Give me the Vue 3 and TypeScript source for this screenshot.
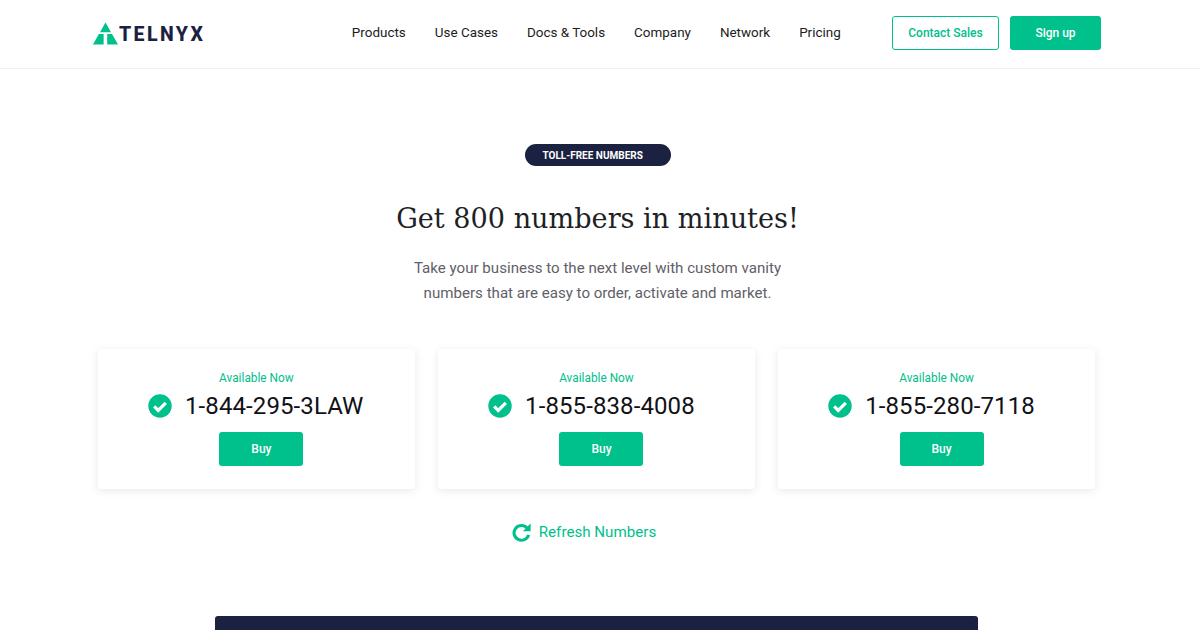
<script setup lang="ts">
const navItems: string[] = ['Products', 'Use Cases', 'Docs & Tools', 'Company', 'Network', 'Pricing']
const numbers: string[] = ['1-844-295-3LAW', '1-855-838-4008', '1-855-280-7118']
</script>

<template>
  <div class="page">
    <header class="header">
      <a class="logo">
        <svg width="25" height="23" viewBox="0 0 25 23" class="logo-mark">
          <path d="M12.5 0.5 L18 10.2 H7 Z" fill="#00c08b" />
          <path d="M5.9 12 H10.6 V22.5 H0 Z" fill="#00c08b" />
          <path d="M14.2 12 H19 L25 22.5 H14.2 Z" fill="#00c08b" />
        </svg>
        <span class="logo-text">TELNYX</span>
      </a>
      <nav class="nav">
        <span v-for="item in navItems" :key="item" class="nav-item">{{ item }}</span>
      </nav>
      <div class="actions">
        <button class="btn btn-outline">Contact Sales</button>
        <button class="btn btn-solid signup">Sign up</button>
      </div>
    </header>

    <main class="main">
      <div class="pill">TOLL-FREE NUMBERS</div>
      <h1 class="title">Get 800 numbers in minutes!</h1>
      <p class="lead">Take your business to the next level with custom vanity<br />numbers that are easy to order, activate and market.</p>

      <section class="cards">
        <article v-for="n in numbers" :key="n" class="card">
          <div class="avail">Available Now</div>
          <div class="number-row">
            <svg class="check" width="24" height="24" viewBox="0 0 24 24">
              <circle cx="12" cy="12" r="11.7" fill="#00c08b" />
              <path d="M6.2 12.4 L10.2 16.4 L17.8 8.8" fill="none" stroke="#fff" stroke-width="3.2" />
            </svg>
            <span class="number">{{ n }}</span>
          </div>
          <button class="btn btn-solid buy">Buy</button>
        </article>
      </section>

      <div class="refresh">
        <svg width="19" height="19" viewBox="0 0 19 19">
          <path d="M15.2 5.2 A7.4 7.4 0 1 0 16.6 11.8" fill="none" stroke="#00c08b" stroke-width="3.1" />
          <path d="M18.6 0.4 V8.2 H10.8 Z" fill="#00c08b" />
        </svg>
        <span>Refresh Numbers</span>
      </div>

      <div class="dark-panel"></div>
    </main>
  </div>
</template>

<style>
html, body { margin: 0; background: #fff; }
</style>

<style scoped>
.page {
  width: 1200px;
  height: 630px;
  overflow: hidden;
  background: #fff;
  font-family: Roboto, "Liberation Sans", sans-serif;
  color: #1a1a1f;
}
.header {
  height: 69px;
  box-sizing: border-box;
  border-bottom: 1px solid #f0f0f0;
  display: flex;
  align-items: center;
  padding: 0 99px 2px 93px;
}
.logo { display: flex; align-items: center; padding-top: 2px; }
.logo-mark { display: block; margin-top: -1px; }
.logo-text {
  font-size: 19.5px;
  font-weight: 800;
  letter-spacing: 2.4px;
  color: #1b2140;
  margin-left: 1px;
  line-height: 24px;
  padding-top: 2px;
}
.nav {
  display: flex;
  gap: 29px;
  margin-left: 146.6px;
  font-size: 13.45px;
  color: #1c1c22;
}
.nav-item { line-height: 20px; }
.actions { display: flex; gap: 11px; margin-left: auto; }
.btn {
  box-sizing: border-box;
  border-radius: 3px;
  font-family: inherit;
  font-size: 12px;
  font-weight: 500;
  height: 33.5px;
  padding: 0;
  cursor: pointer;
}
.btn-outline {
  width: 107px;
  background: #fff;
  color: #00c08b;
  border: 1px solid #00c08b;
}
.btn-solid { background: #00c08b; color: #fff; border: 0; }
.signup { width: 91px; }
.main {
  display: flex;
  flex-direction: column;
  align-items: center;
  padding-top: 75px;
}
.pill {
  width: 146px;
  height: 22px;
  box-sizing: border-box;
  padding-left: 18px;
  border-radius: 11px;
  background: #1b2140;
  color: #fff;
  font-size: 10px;
  font-weight: 700;
  line-height: 23px;
  margin-left: -5px;
}
.title {
  margin: 33px 0 0 -5px;
  font-family: "DejaVu Serif", "Liberation Serif", serif;
  font-weight: 400;
  font-size: 27.1px;
  line-height: 40px;
  color: #1f1f26;
}
.lead {
  margin: 17px 0 0 -5px;
  text-align: center;
  font-size: 15.1px;
  line-height: 25px;
  color: #5f6068;
}
.cards {
  display: flex;
  gap: 22.3px;
  margin: 43px 0 0 -7px;
  width: 998px;
}
.card {
  flex: 1;
  height: 140px;
  box-sizing: border-box;
  padding-top: 22px;
  display: flex;
  flex-direction: column;
  align-items: center;
  background: #fff;
  border-radius: 3px;
  box-shadow: 0 2px 10px rgba(0, 0, 0, 0.09);
}
.avail {
  font-size: 11.85px;
  line-height: 14px;
  color: #00c08b;
}
.number-row {
  display: flex;
  align-items: center;
  gap: 13px;
  height: 28px;
  margin-top: 7px;
  align-self: flex-start;
  margin-left: 50.5px;
}
.check { display: block; }
.number {
  font-size: 24px;
  line-height: 28px;
  letter-spacing: 0.1px;
  color: #111116;
}
.buy { width: 84px; margin-top: 12px; margin-left: 10px; }
.refresh {
  display: flex;
  align-items: center;
  gap: 8px;
  margin: 33px 0 0 -32px;
  font-size: 15.15px;
  line-height: 20px;
  color: #00c08b;
}
.dark-panel {
  width: 763px;
  height: 40px;
  margin: 74px 0 0 -7px;
  background: #1b2140;
  border-radius: 3px 3px 0 0;
}
</style>
